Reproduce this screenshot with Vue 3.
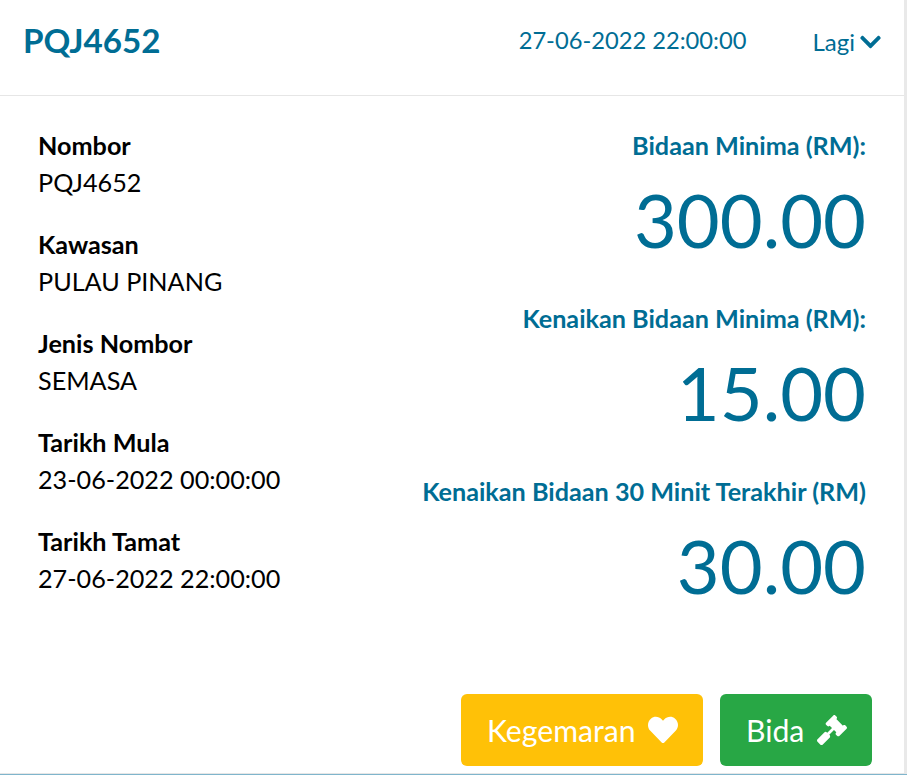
<script setup>
const fields = [
  { label: 'Nombor', value: 'PQJ4652' },
  { label: 'Kawasan', value: 'PULAU PINANG' },
  { label: 'Jenis Nombor', value: 'SEMASA' },
  { label: 'Tarikh Mula', value: '23-06-2022 00:00:00' },
  { label: 'Tarikh Tamat', value: '27-06-2022 22:00:00' },
]
const amounts = [
  { label: 'Bidaan Minima (RM):', value: '300.00' },
  { label: 'Kenaikan Bidaan Minima (RM):', value: '15.00' },
  { label: 'Kenaikan Bidaan 30 Minit Terakhir (RM)', value: '30.00' },
]
</script>

<template>
  <div class="page">
    <div class="card">
      <header class="head">
        <div class="plate">PQJ4652</div>
        <div class="date">27-06-2022 22:00:00</div>
        <div class="more">
          Lagi
          <svg width="21" height="24" viewBox="0 0 448 512"><path fill="#006d94" d="M207.029 381.476L12.686 187.132c-9.373-9.373-9.373-24.569 0-33.941l22.667-22.667c9.357-9.357 24.522-9.375 33.901-.04L224 284.505l154.745-154.021c9.379-9.335 24.544-9.317 33.901.04l22.667 22.667c9.373 9.373 9.373 24.569 0 33.941L240.971 381.476c-9.373 9.372-24.569 9.372-33.942 0z" /></svg>
        </div>
      </header>
      <main class="body">
        <div class="fields">
          <div v-for="f in fields" :key="f.label" class="field">
            <div class="label">{{ f.label }}</div>
            <div class="value">{{ f.value }}</div>
          </div>
        </div>
        <div class="amounts">
          <div v-for="a in amounts" :key="a.label" class="amount">
            <div class="amount-label">{{ a.label }}</div>
            <div class="amount-value">{{ a.value }}</div>
          </div>
        </div>
      </main>
      <footer class="actions">
        <button class="btn fav">
          Kegemaran
          <svg width="30" height="30" viewBox="0 0 512 512"><path fill="#fff" d="M462.3 62.6C407.5 15.9 326 24.3 275.7 76.2L256 96.5l-19.7-20.3C186.1 24.3 104.5 15.9 49.7 62.6c-62.8 53.6-66.1 149.8-9.9 207.9l193.5 199.8c12.5 12.9 32.8 12.9 45.3 0l193.5-199.8c56.3-58.1 53-154.3-9.8-207.9z" /></svg>
        </button>
        <button class="btn bid">
          Bida
          <svg width="30" height="30" viewBox="0 0 512 512"><path fill="#fff" d="M504.971 199.362l-22.627-22.627c-9.373-9.373-24.569-9.373-33.941 0l-5.657 5.657L329.608 69.255l5.657-5.657c9.373-9.373 9.373-24.569 0-33.941L312.638 7.029c-9.373-9.373-24.569-9.373-33.941 0L154.246 131.48c-9.373 9.373-9.373 24.569 0 33.941l22.627 22.627c9.373 9.373 24.569 9.373 33.941 0l5.657-5.657 39.598 39.598-81.04 81.04-5.657-5.657c-12.497-12.497-32.758-12.497-45.255 0L9.373 412.118c-12.497 12.497-12.497 32.758 0 45.255l45.255 45.255c12.497 12.497 32.758 12.497 45.255 0l114.745-114.745c12.497-12.497 12.497-32.758 0-45.255l-5.657-5.657 81.04-81.04 39.598 39.598-5.657 5.657c-9.373 9.373-9.373 24.569 0 33.941l22.627 22.627c9.373 9.373 24.569 9.373 33.941 0l124.451-124.451c9.372-9.372 9.372-24.568 0-33.941z" /></svg>
        </button>
      </footer>
    </div>
  </div>
</template>

<style>
body { background: #fff; }
</style>

<style scoped>
.page {
  box-sizing: border-box;
  width: 907px;
  height: 775px;
  display: flex;
  border-bottom: 1px solid #7fb5cc;
  overflow: hidden;
  font-family: Lato, "Liberation Sans", sans-serif;
  color: #000;
}
.card {
  box-sizing: border-box;
  flex: 1;
  display: flex;
  flex-direction: column;
  border-right: 3px solid #e9e9e9;
  border-bottom: 1px solid #e6e6e6;
}
.head {
  height: 96px;
  box-sizing: border-box;
  display: flex;
  align-items: center;
  padding: 0 23px 16px 23px;
  border-bottom: 1px solid #e6e6e6;
  color: #006d94;
}
.plate { font-size: 33.2px; font-weight: 700; flex: 1; }
.date { font-size: 23.7px; margin-right: 66px; }
.more { font-size: 24px; display: flex; align-items: center; gap: 5px; padding-top: 4px; }
.body {
  flex: 1;
  display: flex;
  justify-content: space-between;
  padding: 31px 38px 0 38px;
}
.field { margin-bottom: 26px; }
.label { font-size: 25.2px; font-weight: 700; line-height: 37px; }
.value { font-size: 25.2px; line-height: 36px; }
.amounts { text-align: right; color: #006d94; }
.amount-label { font-size: 25.2px; font-weight: 700; line-height: 36px; }
.amount-value { font-size: 74px; line-height: 101px; margin-top: 6px; margin-bottom: 30px; }
.actions {
  display: flex;
  justify-content: flex-end;
  gap: 17px;
  padding: 0 32px 7px 0;
}
.btn {
  height: 72px;
  border: none;
  border-radius: 6px;
  font-family: inherit;
  font-size: 30.2px;
  color: #fff;
  display: flex;
  align-items: center;
  gap: 13px;
  padding: 0 24px 0 26px;
}
.fav { background: #ffc107; width: 242px; gap: 12px; }
.bid { background: #28a745; width: 152px; }
</style>
